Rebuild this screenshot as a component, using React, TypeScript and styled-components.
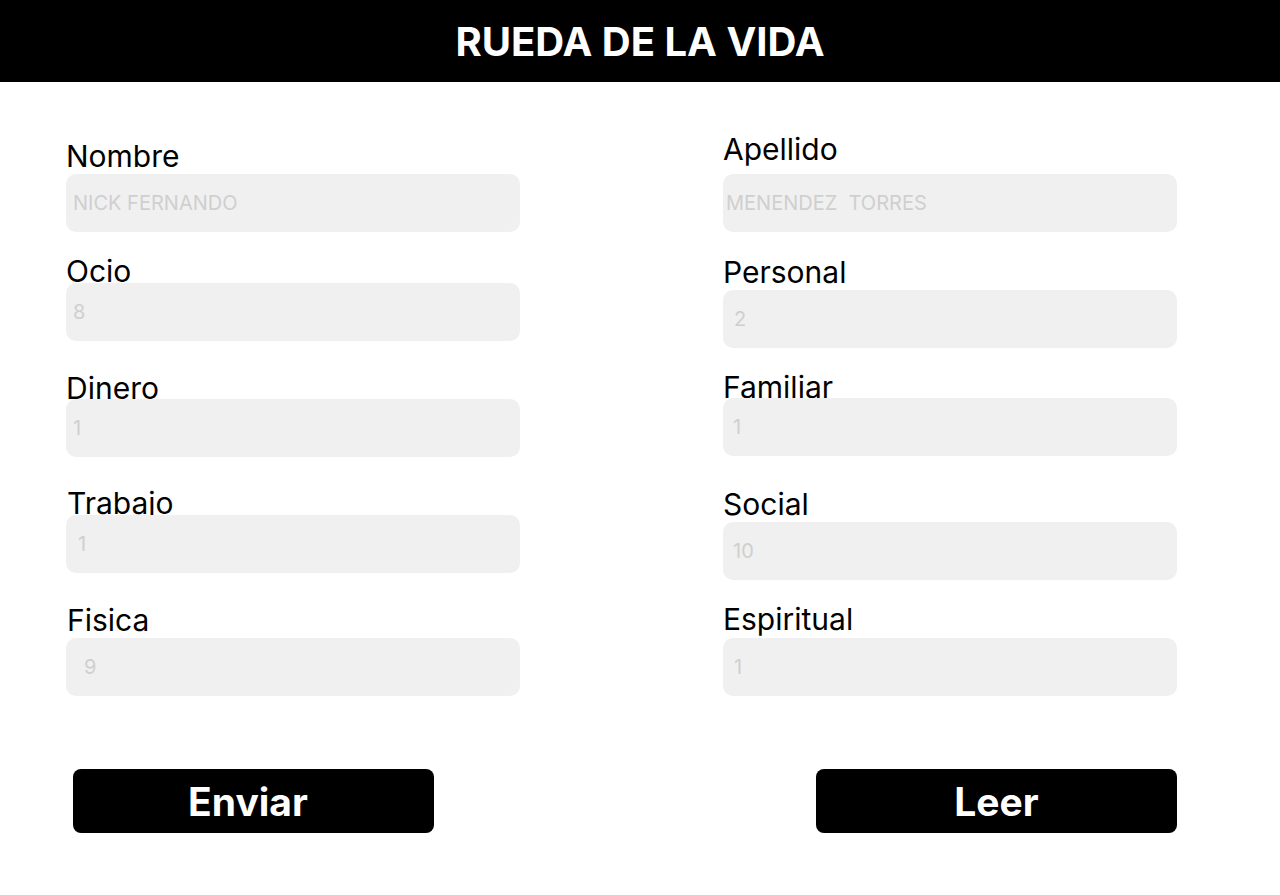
import { FC } from "react";
import styled, { createGlobalStyle } from "styled-components";

const GlobalStyle = createGlobalStyle`
  body {
    margin: 0;
    background: #ffffff;
    font-family: Inter, "Noto Sans", sans-serif;
  }
`;

const Header = styled.header`
  height: 82px;
  background: #000000;
  display: flex;
  align-items: center;
  justify-content: center;

  > h1 {
    margin: 0;
    color: #ffffff;
    font-size: 40px;
    font-weight: 700;
    line-height: 1;
    padding-top: 2px;
  }
`;

const Form = styled.form`
  display: grid;
  grid-template-columns: 454px 454px;
  column-gap: 203px;
  padding-left: 66px;
`;

const Column = styled.div<{ $top: number }>`
  display: flex;
  flex-direction: column;
  padding-top: ${(p) => p.$top}px;
`;

const Field = styled.label<{ $top: number }>`
  display: flex;
  flex-direction: column;
  margin-top: ${(p) => p.$top}px;
`;

const LabelText = styled.span<{ $gap: number; $indent: number }>`
  font-size: 30px;
  line-height: 36px;
  color: #000000;
  padding-left: ${(p) => p.$indent}px;
  margin-bottom: ${(p) => p.$gap}px;
`;

const Input = styled.input<{ $pad: number }>`
  position: relative;
  box-sizing: border-box;
  width: 454px;
  height: 58px;
  border: none;
  border-radius: 10px;
  background: #f0f0f0;
  padding: 0 0 0 ${(p) => p.$pad}px;
  font-family: Inter, "Noto Sans", sans-serif;
  font-size: 20px;
  color: #333333;
  outline: none;

  &::placeholder {
    color: #cfcfcf;
  }
`;

const Actions = styled.div`
  display: flex;
  justify-content: space-between;
  width: 1104px;
  margin: 73px 0 0 73px;
`;

const Button = styled.button<{ $nudge?: number }>`
  width: 361px;
  height: 64px;
  border: none;
  border-radius: 8px;
  background: #000000;
  color: #ffffff;
  font-family: Inter, "Noto Sans", sans-serif;
  font-size: 39px;
  font-weight: 700;
  padding: 0 ${(p) => p.$nudge ?? 0}px 0 0;
  cursor: pointer;
`;

type FieldSpec = {
  label: string;
  value: string;
  top: number;
  gap: number;
  pad: number;
  indent?: number;
};

const left: FieldSpec[] = [
  { label: "Nombre", value: "NICK FERNANDO", top: 0, gap: 0, pad: 7 },
  { label: "Ocio", value: "8", top: 21, gap: -6, pad: 7 },
  { label: "Dinero", value: "1", top: 29, gap: -7, pad: 7 },
  { label: "Trabajo", value: "1", top: 28, gap: -6, pad: 12, indent: 1 },
  { label: "Fisica", value: "9", top: 29, gap: 0, pad: 18, indent: 1 },
];

const right: FieldSpec[] = [
  { label: "Apellido", value: "MENENDEZ  TORRES", top: 0, gap: 7, pad: 3 },
  { label: "Personal", value: "2", top: 22, gap: 0, pad: 11 },
  { label: "Familiar", value: "1", top: 21, gap: -7, pad: 10 },
  { label: "Social", value: "10", top: 30, gap: 0, pad: 10 },
  { label: "Espiritual", value: "1", top: 21, gap: 1, pad: 11 },
];

const renderFields = (fields: FieldSpec[]) =>
  fields.map((f) => (
    <Field key={f.label} $top={f.top}>
      <LabelText $gap={f.gap} $indent={f.indent ?? 0}>
        {f.label}
      </LabelText>
      <Input type="text" placeholder={f.value} $pad={f.pad} />
    </Field>
  ));

const App: FC = () => {
  return (
    <>
      <GlobalStyle />
      <Header>
        <h1>RUEDA DE LA VIDA</h1>
      </Header>
      <Form onSubmit={(e) => e.preventDefault()}>
        <Column $top={56}>{renderFields(left)}</Column>
        <Column $top={49}>{renderFields(right)}</Column>
      </Form>
      <Actions>
        <Button type="button" $nudge={11}>Enviar</Button>
        <Button type="button">Leer</Button>
      </Actions>
    </>
  );
};

export default App;
